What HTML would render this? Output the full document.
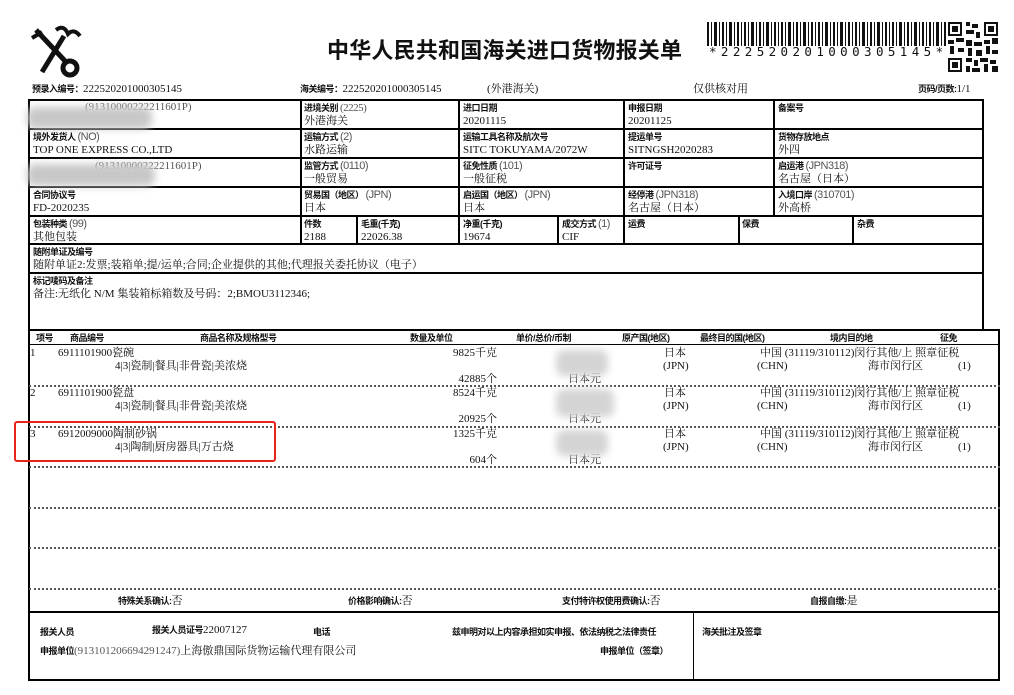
<!DOCTYPE html>
<html><head><meta charset="utf-8">
<style>
body{margin:0;width:1014px;height:695px;background:#fff;position:relative;overflow:hidden;font-family:"Liberation Serif","Noto Serif CJK SC",serif;color:#111}
div,span{position:absolute;white-space:nowrap}
.h{background:#000;height:2px}
.v{background:#000;width:2px}
.dh{height:0;border-top:2px dotted #555}
.b{font-family:"Liberation Sans","Noto Sans CJK SC",sans-serif;font-weight:bold;font-size:9px;letter-spacing:-0.5px;line-height:12px}
.t{font-size:11px;line-height:13px}
.g{color:#555}
.blur{background:#c8c8c8;filter:blur(4px);border-radius:8px}
</style></head><body>
<!-- logo -->
<svg style="position:absolute;left:28px;top:22px" width="56" height="58" viewBox="0 0 56 58">
<g stroke="#111" fill="none" stroke-width="5">
<line x1="8" y1="8" x2="38" y2="40"/>
<circle cx="42" cy="46" r="7"/>
<line x1="36" y1="14" x2="14" y2="50"/>
<path d="M28 8 q8 -6 12 4 q6 -6 12 2" stroke-width="4"/>
<path d="M4 16 l10 -6" stroke-width="4"/>
</g></svg>
<div style="left:327px;top:33px;font-family:'Noto Sans CJK SC',sans-serif;font-weight:bold;font-size:22px;letter-spacing:0.2px">中华人民共和国海关进口货物报关单</div>
<!-- barcode -->
<svg style="position:absolute;left:707px;top:22px" width="240" height="24">
<g fill="#111">
<rect x="0" y="0" width="2" height="24"/><rect x="4" y="0" width="1" height="24"/><rect x="7" y="0" width="3" height="24"/><rect x="12" y="0" width="1" height="24"/><rect x="15" y="0" width="2" height="24"/><rect x="19" y="0" width="1" height="24"/><rect x="22" y="0" width="3" height="24"/><rect x="27" y="0" width="1" height="24"/><rect x="30" y="0" width="2" height="24"/><rect x="34" y="0" width="1" height="24"/><rect x="37" y="0" width="2" height="24"/><rect x="41" y="0" width="1" height="24"/><rect x="44" y="0" width="3" height="24"/><rect x="49" y="0" width="1" height="24"/><rect x="52" y="0" width="2" height="24"/><rect x="56" y="0" width="1" height="24"/><rect x="59" y="0" width="3" height="24"/><rect x="64" y="0" width="1" height="24"/><rect x="67" y="0" width="2" height="24"/><rect x="71" y="0" width="1" height="24"/><rect x="74" y="0" width="2" height="24"/><rect x="78" y="0" width="1" height="24"/><rect x="81" y="0" width="3" height="24"/><rect x="86" y="0" width="1" height="24"/><rect x="89" y="0" width="2" height="24"/><rect x="93" y="0" width="1" height="24"/><rect x="96" y="0" width="3" height="24"/><rect x="101" y="0" width="1" height="24"/><rect x="104" y="0" width="2" height="24"/><rect x="108" y="0" width="1" height="24"/><rect x="111" y="0" width="2" height="24"/><rect x="115" y="0" width="1" height="24"/><rect x="118" y="0" width="3" height="24"/><rect x="123" y="0" width="1" height="24"/><rect x="126" y="0" width="2" height="24"/><rect x="130" y="0" width="1" height="24"/><rect x="133" y="0" width="3" height="24"/><rect x="138" y="0" width="1" height="24"/><rect x="141" y="0" width="2" height="24"/><rect x="145" y="0" width="1" height="24"/><rect x="148" y="0" width="2" height="24"/><rect x="152" y="0" width="1" height="24"/><rect x="155" y="0" width="3" height="24"/><rect x="160" y="0" width="1" height="24"/><rect x="163" y="0" width="2" height="24"/><rect x="167" y="0" width="1" height="24"/><rect x="170" y="0" width="3" height="24"/><rect x="175" y="0" width="1" height="24"/><rect x="178" y="0" width="2" height="24"/><rect x="182" y="0" width="1" height="24"/><rect x="185" y="0" width="2" height="24"/><rect x="189" y="0" width="1" height="24"/><rect x="192" y="0" width="3" height="24"/><rect x="197" y="0" width="1" height="24"/><rect x="200" y="0" width="2" height="24"/><rect x="204" y="0" width="1" height="24"/><rect x="207" y="0" width="3" height="24"/><rect x="212" y="0" width="1" height="24"/><rect x="215" y="0" width="2" height="24"/><rect x="219" y="0" width="1" height="24"/><rect x="222" y="0" width="2" height="24"/><rect x="226" y="0" width="1" height="24"/><rect x="229" y="0" width="3" height="24"/><rect x="234" y="0" width="1" height="24"/><rect x="237" y="0" width="2" height="24"/>
</g></svg>
<div style="left:709px;top:44px;font-family:'DejaVu Sans Mono',monospace;font-size:12.5px;letter-spacing:4.4px">*222520201000305145*</div>
<!-- QR -->
<svg style="position:absolute;left:948px;top:22px" width="50" height="50" viewBox="0 0 25 25">
<g fill="#111">
<path d="M0 0h7v7h-7zM1 1v5h5v-5zM2 2h3v3h-3z" fill-rule="evenodd"/>
<path d="M18 0h7v7h-7zM19 1v5h5v-5zM20 2h3v3h-3z" fill-rule="evenodd"/>
<path d="M0 18h7v7h-7zM1 19v5h5v-5zM2 20h3v3h-3z" fill-rule="evenodd"/>
<rect x="9" y="0" width="2" height="2"/><rect x="12" y="1" width="3" height="2"/><rect x="9" y="4" width="4" height="2"/><rect x="14" y="5" width="2" height="3"/>
<rect x="0" y="9" width="3" height="2"/><rect x="4" y="8" width="4" height="2"/><rect x="9" y="9" width="3" height="3"/><rect x="13" y="10" width="4" height="2"/><rect x="18" y="9" width="3" height="2"/><rect x="22" y="8" width="3" height="3"/>
<rect x="1" y="12" width="2" height="4"/><rect x="5" y="13" width="3" height="2"/><rect x="10" y="13" width="2" height="4"/><rect x="14" y="14" width="3" height="3"/><rect x="19" y="12" width="2" height="4"/><rect x="22" y="14" width="3" height="2"/>
<rect x="9" y="18" width="3" height="2"/><rect x="13" y="19" width="2" height="3"/><rect x="16" y="18" width="4" height="2"/><rect x="21" y="19" width="3" height="2"/><rect x="9" y="22" width="2" height="3"/><rect x="12" y="23" width="4" height="2"/><rect x="18" y="21" width="2" height="4"/><rect x="22" y="22" width="3" height="3"/>
</g></svg>

<!-- header line -->
<div style="left:32px;top:83px" class="t"><span class="b" style="position:static">预录入编号：</span>222520201000305145</div>
<div style="left:300px;top:83px" class="t"><span class="b" style="position:static">海关编号：</span>222520201000305145</div>
<div style="left:487px;top:83px" class="t">(外港海关)</div>
<div style="left:693px;top:83px" class="t">仅供核对用</div>
<div style="left:918px;top:83px" class="t"><span class="b" style="position:static">页码/页数:</span>1/1</div>

<!-- top table frame -->
<div class="h" style="left:29px;top:99px;width:955px"></div>
<div class="v" style="left:28px;top:99px;height:582px"></div>
<div class="v" style="left:982px;top:99px;height:232px"></div>
<div class="h" style="left:29px;top:128px;width:955px"></div>
<div class="h" style="left:29px;top:157px;width:955px"></div>
<div class="h" style="left:29px;top:186px;width:955px"></div>
<div class="h" style="left:29px;top:215px;width:955px"></div>
<div class="h" style="left:29px;top:243px;width:955px"></div>
<div class="h" style="left:29px;top:272px;width:955px"></div>
<div class="h" style="left:29px;top:329px;width:971px"></div>
<div class="v" style="left:300px;top:99px;height:145px"></div>
<div class="v" style="left:458px;top:99px;height:145px"></div>
<div class="v" style="left:623px;top:99px;height:145px"></div>
<div class="v" style="left:773px;top:99px;height:117px"></div>
<div class="v" style="left:356px;top:215px;height:29px"></div>
<div class="v" style="left:557px;top:215px;height:29px"></div>
<div class="v" style="left:738px;top:215px;height:29px"></div>
<div class="v" style="left:852px;top:215px;height:29px"></div>

<!-- row1 -->
<div class="t g" style="left:85px;top:101px">(91310000222211601P)</div>
<div class="blur" style="left:27px;top:107px;width:125px;height:22px"></div>
<div class="b" style="left:304px;top:102px">进境关别 <span class="t g" style="position:static;font-weight:normal;font-family:'Liberation Serif','Noto Serif CJK SC',serif">(2225)</span></div>
<div class="t" style="left:304px;top:115px">外港海关</div>
<div class="b" style="left:463px;top:102px">进口日期</div>
<div class="t" style="left:463px;top:115px">20201115</div>
<div class="b" style="left:628px;top:102px">申报日期</div>
<div class="t" style="left:628px;top:115px">20201125</div>
<div class="b" style="left:778px;top:102px">备案号</div>
<!-- row2 -->
<div class="b" style="left:33px;top:131px">境外发货人 <span class="t g" style="position:static;font-weight:normal">(NO)</span></div>
<div class="t" style="left:33px;top:144px">TOP ONE EXPRESS CO.,LTD</div>
<div class="b" style="left:304px;top:131px">运输方式 <span class="t g" style="position:static;font-weight:normal">(2)</span></div>
<div class="t" style="left:304px;top:144px">水路运输</div>
<div class="b" style="left:463px;top:131px">运输工具名称及航次号</div>
<div class="t" style="left:463px;top:144px">SITC TOKUYAMA/2072W</div>
<div class="b" style="left:628px;top:131px">提运单号</div>
<div class="t" style="left:628px;top:144px">SITNGSH2020283</div>
<div class="b" style="left:778px;top:131px">货物存放地点</div>
<div class="t" style="left:778px;top:144px">外四</div>
<!-- row3 -->
<div class="t g" style="left:95px;top:160px">(91310000222211601P)</div>
<div class="blur" style="left:27px;top:164px;width:128px;height:22px"></div>
<div class="b" style="left:304px;top:160px">监管方式 <span class="t g" style="position:static;font-weight:normal">(0110)</span></div>
<div class="t" style="left:304px;top:173px">一般贸易</div>
<div class="b" style="left:463px;top:160px">征免性质 <span class="t g" style="position:static;font-weight:normal">(101)</span></div>
<div class="t" style="left:463px;top:173px">一般征税</div>
<div class="b" style="left:628px;top:160px">许可证号</div>
<div class="b" style="left:778px;top:160px">启运港 <span class="t g" style="position:static;font-weight:normal">(JPN318)</span></div>
<div class="t" style="left:778px;top:173px">名古屋（日本）</div>
<!-- row4 -->
<div class="b" style="left:33px;top:189px">合同协议号</div>
<div class="t" style="left:33px;top:202px">FD-2020235</div>
<div class="b" style="left:304px;top:189px">贸易国（地区） <span class="t g" style="position:static;font-weight:normal">(JPN)</span></div>
<div class="t" style="left:304px;top:202px">日本</div>
<div class="b" style="left:463px;top:189px">启运国（地区） <span class="t g" style="position:static;font-weight:normal">(JPN)</span></div>
<div class="t" style="left:463px;top:202px">日本</div>
<div class="b" style="left:628px;top:189px">经停港 <span class="t g" style="position:static;font-weight:normal">(JPN318)</span></div>
<div class="t" style="left:628px;top:202px">名古屋（日本）</div>
<div class="b" style="left:778px;top:189px">入境口岸 <span class="t g" style="position:static;font-weight:normal">(310701)</span></div>
<div class="t" style="left:778px;top:202px">外高桥</div>
<!-- row5 -->
<div class="b" style="left:33px;top:218px">包装种类 <span class="t g" style="position:static;font-weight:normal">(99)</span></div>
<div class="t" style="left:33px;top:231px">其他包装</div>
<div class="b" style="left:304px;top:218px">件数</div>
<div class="t" style="left:304px;top:231px">2188</div>
<div class="b" style="left:361px;top:218px">毛重(千克)</div>
<div class="t" style="left:361px;top:231px">22026.38</div>
<div class="b" style="left:463px;top:218px">净重(千克)</div>
<div class="t" style="left:463px;top:231px">19674</div>
<div class="b" style="left:562px;top:218px">成交方式 <span class="t g" style="position:static;font-weight:normal">(1)</span></div>
<div class="t" style="left:562px;top:231px">CIF</div>
<div class="b" style="left:628px;top:218px">运费</div>
<div class="b" style="left:742px;top:218px">保费</div>
<div class="b" style="left:857px;top:218px">杂费</div>
<!-- row6,7 -->
<div class="b" style="left:33px;top:246px">随附单证及编号</div>
<div class="t" style="left:33px;top:259px">随附单证2:发票;装箱单;提/运单;合同;企业提供的其他;代理报关委托协议（电子）</div>
<div class="b" style="left:33px;top:275px">标记唛码及备注</div>
<div class="t" style="left:33px;top:288px">备注:无纸化 N/M  集装箱标箱数及号码：2;BMOU3112346;</div>

<!-- goods frame -->
<div class="v" style="left:998px;top:329px;height:352px"></div>
<div class="b" style="left:36px;top:332px">项号</div>
<div class="b" style="left:70px;top:332px">商品编号</div>
<div class="b" style="left:200px;top:332px">商品名称及规格型号</div>
<div class="b" style="left:410px;top:332px">数量及单位</div>
<div class="b" style="left:516px;top:332px">单价/总价/币制</div>
<div class="b" style="left:622px;top:332px">原产国(地区)</div>
<div class="b" style="left:700px;top:332px">最终目的国(地区)</div>
<div class="b" style="left:830px;top:332px">境内目的地</div>
<div class="b" style="left:940px;top:332px">征免</div>
<div class="h" style="left:29px;top:344px;width:971px;height:1px"></div>

<!-- goods rows -->
<div class="t" style="left:30px;top:347px">1</div>
<div class="t" style="left:58px;top:347px">6911101900瓷碗</div>
<div class="t" style="left:115px;top:360px">4|3|瓷制|餐具|非骨瓷|美浓烧</div>
<div class="t" style="left:440px;top:347px;width:57px;text-align:right">9825千克</div>
<div class="t" style="left:440px;top:373px;width:57px;text-align:right">42885个</div>
<div class="t" style="left:568px;top:373px">日本元</div>
<div class="blur" style="left:556px;top:350px;width:52px;height:26px;background:#d4d4d4"></div>
<div class="t" style="left:664px;top:347px">日本</div>
<div class="t" style="left:663px;top:360px">(JPN)</div>
<div class="t" style="left:760px;top:347px">中国 (31119/310112)闵行其他/上 照章征税</div>
<div class="t" style="left:757px;top:360px">(CHN)</div>
<div class="t" style="left:868px;top:360px">海市闵行区</div>
<div class="t" style="left:958px;top:360px">(1)</div>
<div class="dh" style="left:29px;top:385px;width:971px"></div>

<div class="t" style="left:30px;top:387px">2</div>
<div class="t" style="left:58px;top:387px">6911101900瓷盘</div>
<div class="t" style="left:115px;top:400px">4|3|瓷制|餐具|非骨瓷|美浓烧</div>
<div class="t" style="left:440px;top:387px;width:57px;text-align:right">8524千克</div>
<div class="t" style="left:440px;top:413px;width:57px;text-align:right">20925个</div>
<div class="t" style="left:568px;top:413px">日本元</div>
<div class="blur" style="left:556px;top:389px;width:58px;height:28px;background:#d4d4d4"></div>
<div class="t" style="left:664px;top:387px">日本</div>
<div class="t" style="left:663px;top:400px">(JPN)</div>
<div class="t" style="left:760px;top:387px">中国 (31119/310112)闵行其他/上 照章征税</div>
<div class="t" style="left:757px;top:400px">(CHN)</div>
<div class="t" style="left:868px;top:400px">海市闵行区</div>
<div class="t" style="left:958px;top:400px">(1)</div>
<div class="dh" style="left:29px;top:426px;width:971px"></div>

<div class="t" style="left:30px;top:428px">3</div>
<div class="t" style="left:58px;top:428px">6912009000陶制砂锅</div>
<div class="t" style="left:115px;top:441px">4|3|陶制|厨房器具|万古烧</div>
<div class="t" style="left:440px;top:428px;width:57px;text-align:right">1325千克</div>
<div class="t" style="left:440px;top:454px;width:57px;text-align:right">604个</div>
<div class="t" style="left:568px;top:454px">日本元</div>
<div class="blur" style="left:556px;top:430px;width:52px;height:26px;background:#d4d4d4"></div>
<div class="t" style="left:664px;top:428px">日本</div>
<div class="t" style="left:663px;top:441px">(JPN)</div>
<div class="t" style="left:760px;top:428px">中国 (31119/310112)闵行其他/上 照章征税</div>
<div class="t" style="left:757px;top:441px">(CHN)</div>
<div class="t" style="left:868px;top:441px">海市闵行区</div>
<div class="t" style="left:958px;top:441px">(1)</div>
<div class="dh" style="left:29px;top:466px;width:971px"></div>
<div class="dh" style="left:29px;top:507px;width:971px"></div>
<div class="dh" style="left:29px;top:547px;width:971px"></div>
<div class="dh" style="left:29px;top:588px;width:971px"></div>

<div style="left:14px;top:421px;width:258px;height:37px;border:2px solid #e8231c;border-radius:3px"></div>

<!-- confirmations -->
<div class="t" style="left:118px;top:595px"><span class="b" style="position:static">特殊关系确认:</span>否</div>
<div class="t" style="left:348px;top:595px"><span class="b" style="position:static">价格影响确认:</span>否</div>
<div class="t" style="left:562px;top:595px"><span class="b" style="position:static">支付特许权使用费确认:</span>否</div>
<div class="t" style="left:810px;top:595px"><span class="b" style="position:static">自报自缴:</span>是</div>
<div class="h" style="left:29px;top:611px;width:971px"></div>
<div class="v" style="left:693px;top:612px;height:68px;width:1px"></div>

<div class="b" style="left:40px;top:626px">报关人员</div>
<div class="t" style="left:152px;top:624px"><span class="b" style="position:static">报关人员证号</span>22007127</div>
<div class="b" style="left:313px;top:626px">电话</div>
<div class="b" style="left:452px;top:626px">兹申明对以上内容承担如实申报、依法纳税之法律责任</div>
<div class="b" style="left:702px;top:626px">海关批注及签章</div>
<div class="t" style="left:40px;top:645px"><span class="b" style="position:static">申报单位</span><span class="g" style="position:static">(913101206694291247)</span>上海傲鼎国际货物运输代理有限公司</div>
<div class="b" style="left:600px;top:645px">申报单位（签章）</div>
<div class="h" style="left:29px;top:679px;width:971px"></div>
</body></html>
